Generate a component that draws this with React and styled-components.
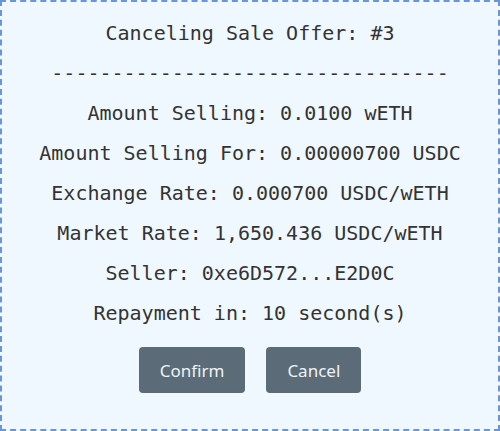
import React from "react";
import styled, { createGlobalStyle } from "styled-components";

const GlobalStyle = createGlobalStyle`
  body {
    margin: 0;
    background: #f0f8ff;
  }
`;

const ModalBox = styled.div`
  box-sizing: border-box;
  width: 500px;
  height: 431px;
  border: 2px dashed #6b95d6;
  background: #f0f8ff;
  padding-top: 11px;
  display: flex;
  flex-direction: column;
  align-items: center;
`;

const Line = styled.div`
  font-family: "DejaVu Sans Mono", monospace;
  font-size: 20px;
  line-height: 40px;
  color: #333;
  white-space: pre;
`;

const Buttons = styled.div`
  display: flex;
  gap: 21px;
  margin-top: 14px;
`;

const Button = styled.button`
  height: 46px;
  padding: 0 21px;
  border: none;
  border-radius: 4px;
  background: #5b6b77;
  color: #eef3f7;
  font-family: "Noto Sans", sans-serif;
  font-size: 17px;
`;

const rows = [
  "Canceling Sale Offer: #3",
  "---------------------------------",
  "Amount Selling: 0.0100 wETH",
  "Amount Selling For: 0.00000700 USDC",
  "Exchange Rate: 0.000700 USDC/wETH",
  "Market Rate: 1,650.436 USDC/wETH",
  "Seller: 0xe6D572...E2D0C",
  "Repayment in: 10 second(s)",
];

const App = () => {
  return (
    <>
      <GlobalStyle />
      <ModalBox>
        {rows.map((r, i) => (
          <Line key={i}>{r}</Line>
        ))}
        <Buttons>
          <Button>Confirm</Button>
          <Button>Cancel</Button>
        </Buttons>
      </ModalBox>
    </>
  );
};

export default App;
